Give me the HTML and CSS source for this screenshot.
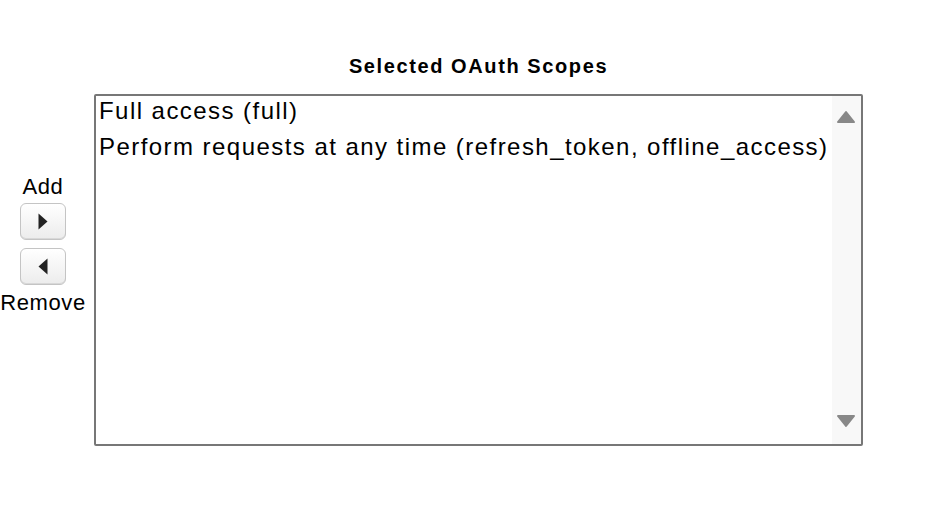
FILE: index.html
```
<html>
<head>
<title>Selected OAuth Scopes</title>
<link rel="stylesheet" href="styles.css">
</head>
<body>

<div class="picker">

	<div class="controls">
		<label class="control_label">Add</label>
		<button class="move_btn" title="Add">
			<svg class="btn_icon" viewBox="0 0 10 17"><path d="M0.5 0.5 L9.5 8.5 L0.5 16.5 Z" fill="#222"/></svg>
		</button>
		<button class="move_btn" title="Remove">
			<svg class="btn_icon" viewBox="0 0 10 17"><path d="M9.5 0.5 L0.5 8.5 L9.5 16.5 Z" fill="#222"/></svg>
		</button>
		<label class="control_label">Remove</label>
	</div>

	<div class="selected">
		<div class="selected_title">Selected OAuth Scopes</div>
		<div class="listbox">
			<div class="options">
				<div class="option">Full access (full)</div>
				<div class="option">Perform requests at any time (refresh_token, offline_access)</div>
			</div>
			<div class="scrollbar">
				<svg class="arrow" viewBox="0 0 20 14"><path d="M10 2 L18 12 L2 12 Z" fill="#888" stroke="#888" stroke-width="2" stroke-linejoin="round"/></svg>
				<svg class="arrow" viewBox="0 0 20 14"><path d="M2 2 L18 2 L10 12 Z" fill="#888" stroke="#888" stroke-width="2" stroke-linejoin="round"/></svg>
			</div>
		</div>
	</div>

</div>

</body>
</html>
```

FILE: styles.css
```
body { margin: 0; background-color: white; font-family: Arial, "Liberation Sans", sans-serif; color: black; }

.picker
{
	display: flex;
	padding-top: 55px;
}

.controls
{
	width: 86px;
	display: flex;
	flex-direction: column;
	align-items: center;
	padding-top: 119px;
	margin-right: 8px;
}
.control_label { font-size: 22px; line-height: 25px; letter-spacing: 0.6px; }
.move_btn
{
	width: 46px;
	height: 37px;
	margin: 4px 0;
	padding: 0;
	display: flex;
	align-items: center;
	justify-content: center;
	border: 1px solid #c4c4c4;
	border-radius: 6px;
	background: linear-gradient(#ffffff, #ececec);
	box-shadow: inset 0 -1px 0 #d8d8d8;
}
.move_btn + .move_btn { margin-top: 4px; margin-bottom: 5px; }
.btn_icon { display: block; flex: none; width: 10px; height: 17px; }

.selected { display: flex; flex-direction: column; }
.selected_title
{
	font-size: 20px;
	font-weight: bold;
	line-height: 23px;
	letter-spacing: 1.6px;
	text-align: center;
	margin-bottom: 16px;
}

.listbox
{
	width: 765px;
	height: 348px;
	border: 2px solid #777;
	border-radius: 2px;
	display: flex;
}
.options { flex: 1; }
.option
{
	font-size: 24px;
	line-height: 28px;
	letter-spacing: 1.45px;
	padding: 1px 3px 7px 3px;
	white-space: nowrap;
}
.scrollbar
{
	width: 30px;
	background-color: #f8f8f8;
	display: flex;
	flex-direction: column;
	justify-content: space-between;
	align-items: center;
	padding: 14px 0 16px 0;
}
.arrow { display: block; width: 20px; height: 14px; }
```
